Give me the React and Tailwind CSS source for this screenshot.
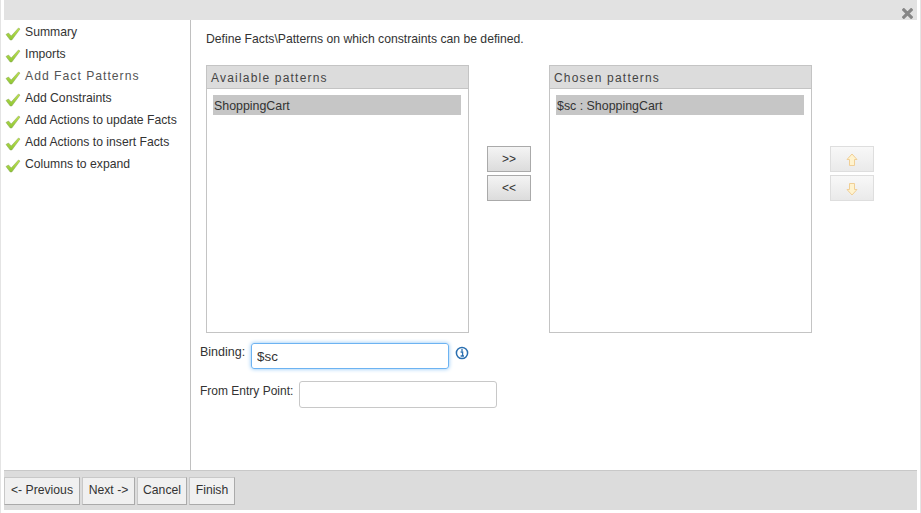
import React from 'react';

const steps = [
  'Summary',
  'Imports',
  'Add Fact Patterns',
  'Add Constraints',
  'Add Actions to update Facts',
  'Add Actions to insert Facts',
  'Columns to expand',
];

const CheckIcon = () => (
  <svg width="16" height="14" viewBox="0 0 16 14" className="shrink-0">
    <defs>
      <linearGradient id="checkFill" x1="0" y1="0" x2="0" y2="1">
        <stop offset="0" stopColor="#c0e44e" />
        <stop offset="1" stopColor="#8cc434" />
      </linearGradient>
    </defs>
    <path d="M1 7.5 L3.5 6 L6.2 9 L13.5 1 L15 2 L6.8 13 L5.2 13 Z" fill="url(#checkFill)" stroke="#86a352" strokeWidth="0.5" />
  </svg>
);

const ArrowIcon = ({ down }) => (
  <svg width="12" height="14" viewBox="0 0 12 14" className={down ? 'rotate-180' : ''}>
    <path d="M6 1 L11 6.5 L8.5 6.5 L8.5 12.5 L3.5 12.5 L3.5 6.5 L1 6.5 Z" fill="#fff3cf" stroke="#f0cf96" strokeWidth="1" />
  </svg>
);

const PatternList = ({ title, item }) => (
  <div className="w-[263px] h-[268px] border border-[#c4c4c4] flex flex-col shrink-0">
    <div className="h-[23px] bg-[#dcdcdc] border-b border-[#c4c4c4] pl-[4px] text-[12px] leading-[24px] tracking-[1.2px] text-[#444]">
      {title}
    </div>
    <div className="pl-[6px] pr-[7px] pt-[6px]">
      <div className="h-[20px] bg-[#c6c6c6] pl-[1px] text-[12.4px] leading-[22px] text-[#333]">{item}</div>
    </div>
  </div>
);

const MoveButton = ({ children }) => (
  <button className="w-[44px] h-[26px] border border-[#aaa] bg-linear-to-b from-[#f4f4f4] to-[#dcdcdc] text-[12px] text-[#333] flex items-center justify-center">
    {children}
  </button>
);

const OrderButton = ({ down }) => (
  <button className="w-[44px] h-[26px] border border-[#dedede] bg-linear-to-b from-[#f8f8f8] to-[#eaeaea] flex items-center justify-center pt-[2px]">
    <ArrowIcon down={down} />
  </button>
);

const FooterButton = ({ children, className }) => (
  <button className={`h-[28px] pb-[2px] bg-[#f0f0f0] border border-[#c8c8c8] border-b-[#aaa] border-r-[#aaa] text-[12.2px] text-[#333] ${className}`}>
    {children}
  </button>
);

export default function App() {
  return (
    <div className="w-[921px] h-[513px] bg-white border-x border-[#e4e4e4] pl-[3px] pr-[3px] flex flex-col font-['Liberation_Sans',Arial,sans-serif]">
      {/* Title bar */}
      <div className="h-[20px] bg-[#e2e2e2] flex justify-end items-end pr-[4px] shrink-0">
        <svg width="11" height="11" viewBox="0 0 12 12" className="mb-[1px]">
          <path d="M2 2 L10 10 M10 2 L2 10" stroke="#868686" strokeWidth="3.4" strokeLinecap="square" />
        </svg>
      </div>

      <div className="flex h-[450px] shrink-0">
        {/* Wizard steps */}
        <div className="w-[187px] border-r border-[#c0c0c0] pt-[1px] pl-[1px] shrink-0">
          {steps.map((step, i) => (
            <div key={step} className="h-[22px] flex items-center gap-[4px] text-[12.2px] text-[#333]">
              <span className="pt-[3px]"><CheckIcon /></span>
              <span className={i === 2 ? 'tracking-[1px] text-[#555]' : ''}>{step}</span>
            </div>
          ))}
        </div>

        {/* Page content */}
        <div className="flex-1 pl-[15px] pt-[11px]">
          <div className="text-[12.2px] leading-[16px] text-[#333]">Define Facts\Patterns on which constraints can be defined.</div>

          <div className="flex mt-[18px]">
            <PatternList title="Available patterns" item="ShoppingCart" />
            <div className="w-[80px] pl-[18px] pt-[81px] flex flex-col gap-[3px] shrink-0">
              <MoveButton>&gt;&gt;</MoveButton>
              <MoveButton>&lt;&lt;</MoveButton>
            </div>
            <PatternList title="Chosen patterns" item="$sc : ShoppingCart" />
            <div className="pl-[18px] pt-[81px] flex flex-col gap-[3px]">
              <OrderButton />
              <OrderButton down />
            </div>
          </div>

          <div className="-ml-[6px] mt-[10px] flex items-start text-[12px] text-[#333]">
            <span className="w-[51px] text-[12.5px] leading-[16px] pt-[1px]">Binding:</span>
            <input
              readOnly
              value="$sc"
              className="w-[198px] h-[26px] rounded-[3px] border border-[#6db3f2] shadow-[0_0_4px_#8cc4f5] px-[5px] text-[13.4px] text-[#333] outline-none"
            />
            <svg width="14" height="14" viewBox="0 0 14 14" className="ml-[6px] mt-[3px]">
              <circle cx="7" cy="7" r="5.6" fill="#fff" stroke="#2a6fb0" strokeWidth="1.5" />
              <path d="M5.6 6 H7.6 V9.8 M5.6 10 H9" stroke="#2a6fb0" strokeWidth="1.3" fill="none" />
              <rect x="6.2" y="3.2" width="1.6" height="1.6" fill="#2a6fb0" />
            </svg>
          </div>

          <div className="-ml-[6px] mt-[12px] flex items-start text-[12px] text-[#333]">
            <span className="w-[99px] leading-[16px] pt-[2px]">From Entry Point:</span>
            <input readOnly className="w-[198px] h-[27px] rounded-[3px] border border-[#c8c8c8] outline-none" />
          </div>
        </div>
      </div>

      {/* Footer buttons */}
      <div className="h-[40px] bg-[#dcdcdc] border-t border-[#c8c8c8] pt-[6px] flex shrink-0 gap-[2px]">
        <FooterButton className="w-[76px]">&lt;- Previous</FooterButton>
        <FooterButton className="w-[53px]">Next -&gt;</FooterButton>
        <FooterButton className="w-[50px]">Cancel</FooterButton>
        <FooterButton className="w-[46px]">Finish</FooterButton>
      </div>
    </div>
  );
}
